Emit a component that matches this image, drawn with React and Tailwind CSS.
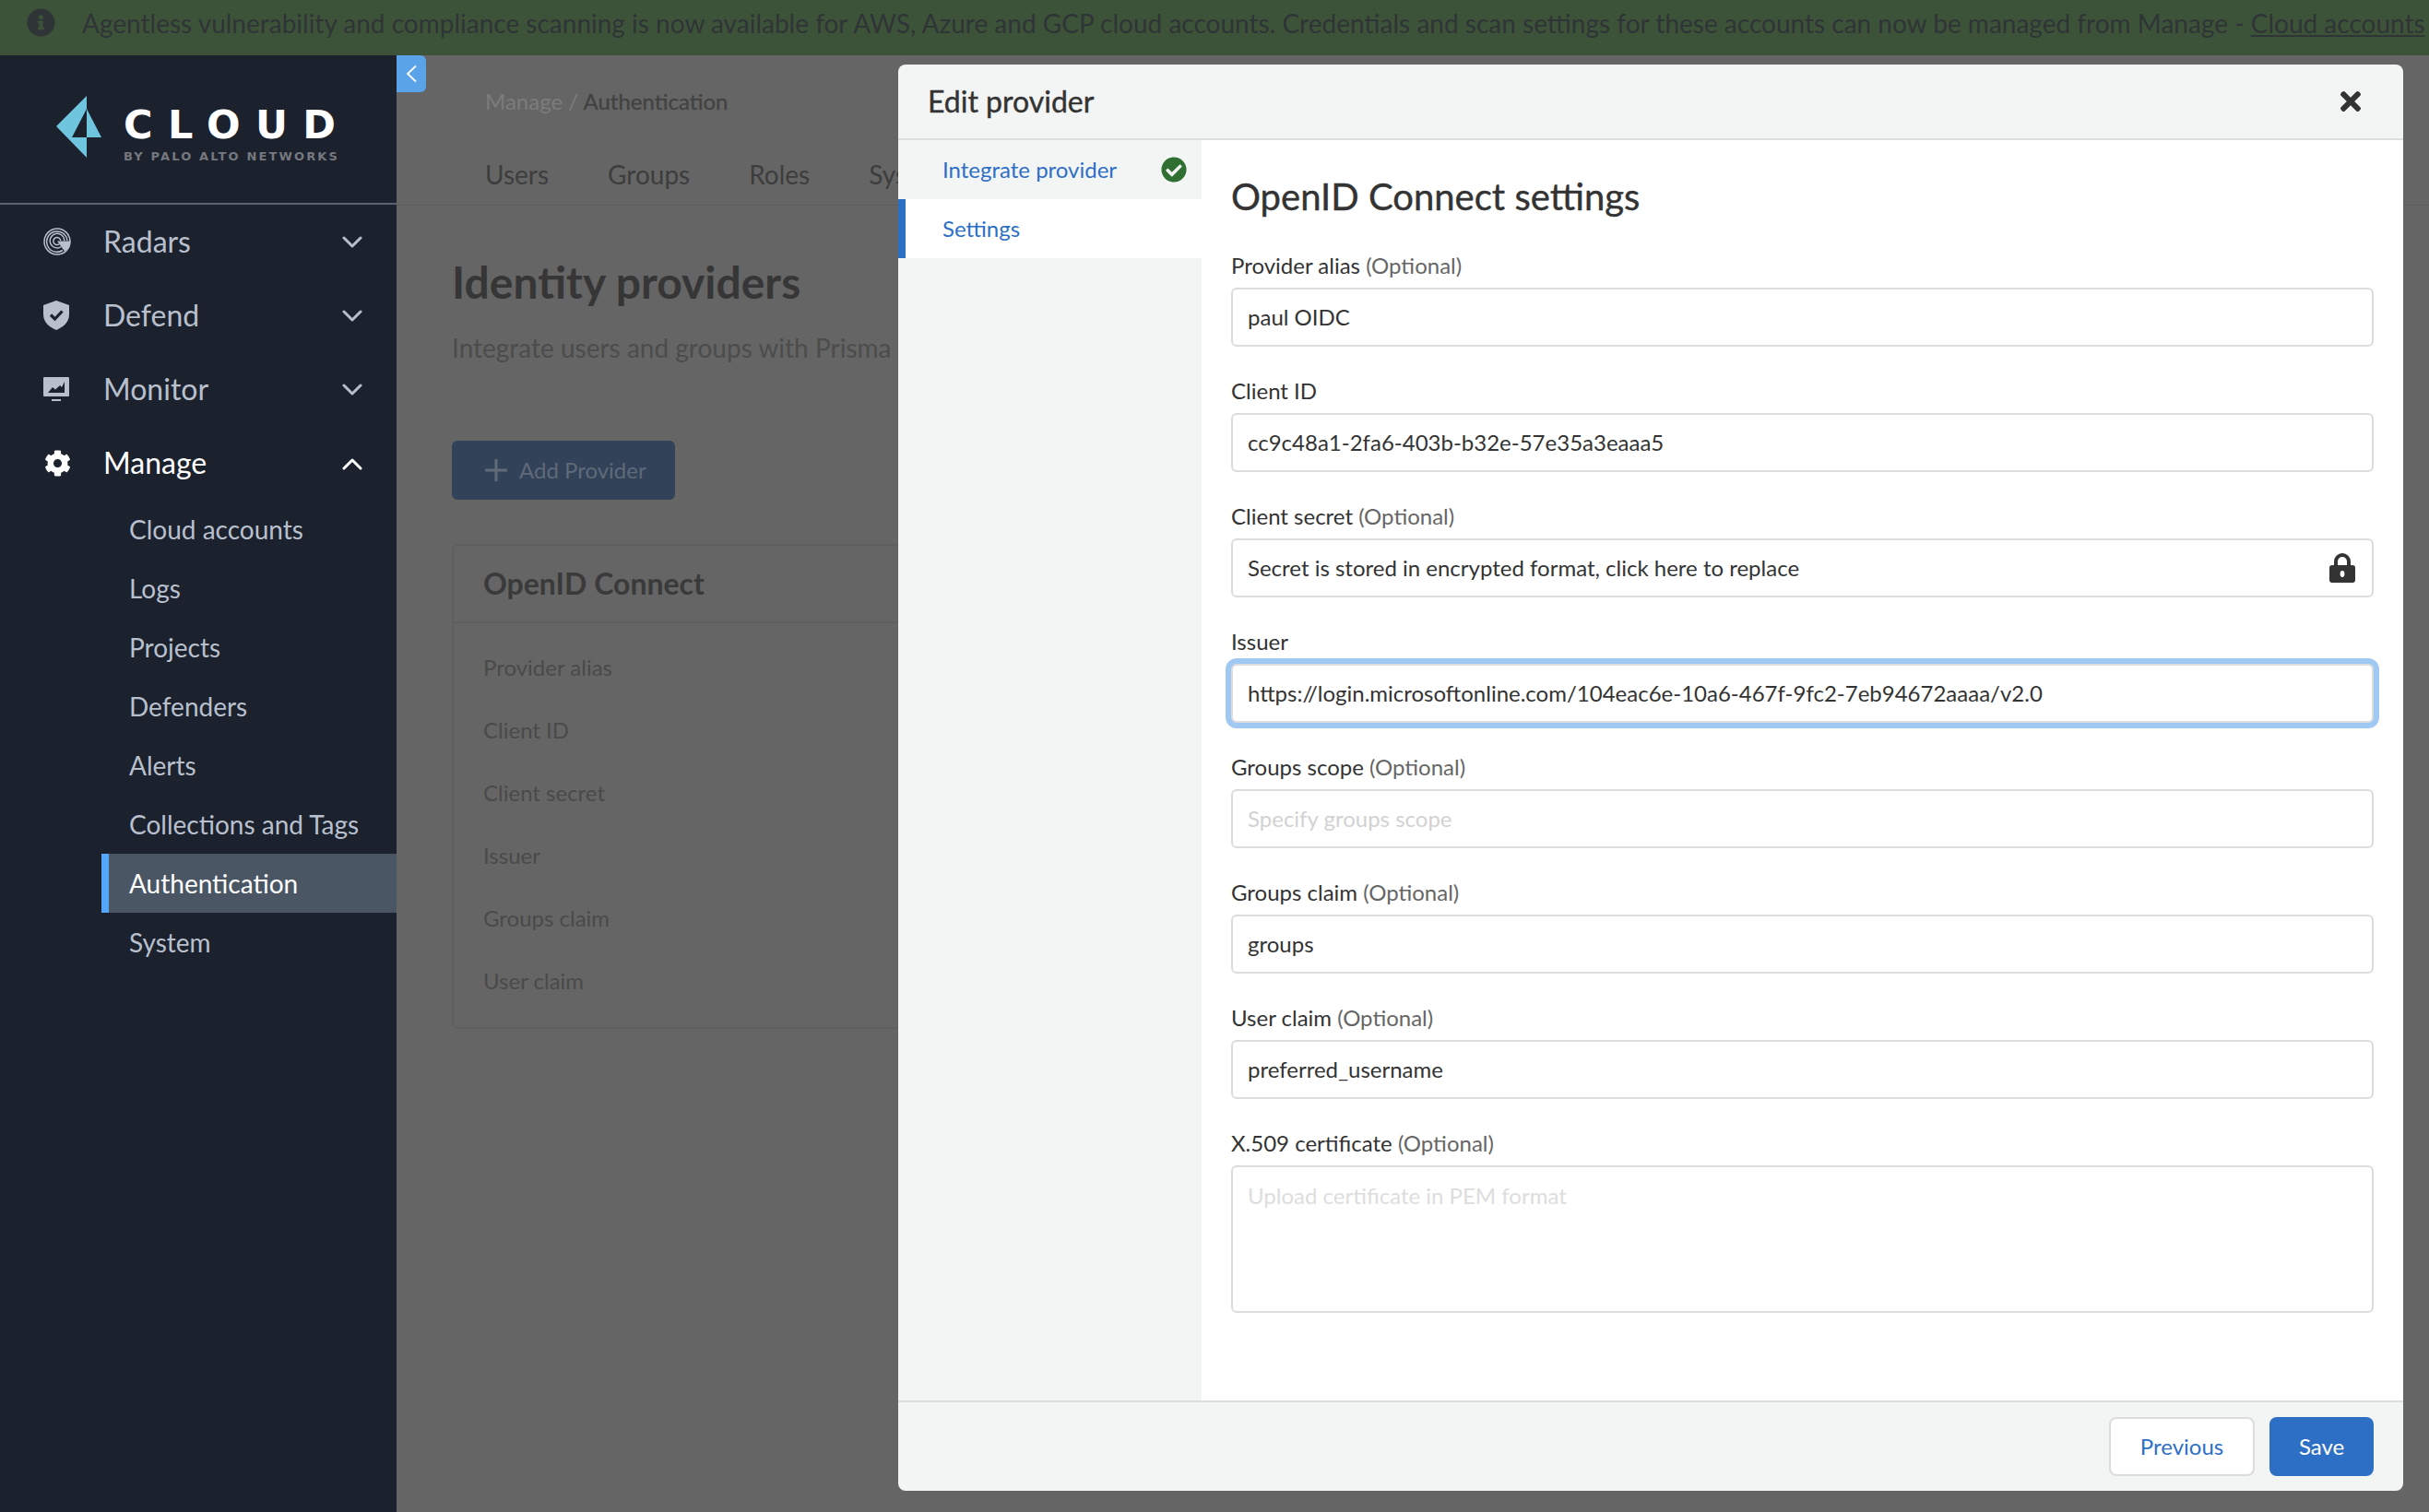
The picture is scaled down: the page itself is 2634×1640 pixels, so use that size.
import React from "react";
import { FaInfoCircle, FaCheckCircle, FaTimes, FaCog } from "react-icons/fa";

const mainNav = [
  { label: "Radars", icon: <RadarIcon /> },
  { label: "Defend", icon: <ShieldIcon /> },
  { label: "Monitor", icon: <MonitorIcon /> },
];

const subNav = ["Cloud accounts", "Logs", "Projects", "Defenders", "Alerts", "Collections and Tags", "Authentication", "System"];

const cardRows = ["Provider alias", "Client ID", "Client secret", "Issuer", "Groups claim", "User claim"];

const fields = [
  { label: "Provider alias", optional: true, value: "paul OIDC" },
  { label: "Client ID", value: "cc9c48a1-2fa6-403b-b32e-57e35a3eaaa5" },
  { label: "Client secret", optional: true, value: "Secret is stored in encrypted format, click here to replace", lock: true },
  { label: "Issuer", value: "https://login.microsoftonline.com/104eac6e-10a6-467f-9fc2-7eb94672aaaa/v2.0", focus: true },
  { label: "Groups scope", optional: true, placeholder: "Specify groups scope" },
  { label: "Groups claim", optional: true, value: "groups" },
  { label: "User claim", optional: true, value: "preferred_username" },
];

function RadarIcon() {
  return (
    <svg width="30" height="30" viewBox="0 0 30 30" fill="none" stroke="#b9c0cd" strokeWidth="1.5">
      <circle cx="15" cy="15" r="14" />
      <path d="M21 24.5A11.2 11.2 0 1 1 26 14" />
      <path d="M19.5 20.5A7.8 7.8 0 1 1 22.8 14" />
      <path d="M17.5 17.5A4 4 0 1 1 18.8 14" />
      <path d="M15 14.5L29.4 14.5A14 14 0 0 1 23 25.5Z" fill="#b9c0cd" stroke="none" />
    </svg>
  );
}

function ShieldIcon() {
  return (
    <svg width="28" height="32" viewBox="0 0 28 32">
      <path d="M14 0L28 5V15C28 24 21 29 14 32C7 29 0 24 0 15V5Z" fill="#b9c0cd" />
      <path d="M8 15.5L12.5 20L20.5 11.5" fill="none" stroke="#1b212d" strokeWidth="3.2" />
    </svg>
  );
}

function MonitorIcon() {
  return (
    <svg width="28" height="26" viewBox="0 0 28 26">
      <path d="M1 0H27a1 1 0 0 1 1 1V20a1 1 0 0 1-1 1H1a1 1 0 0 1-1-1V1a1 1 0 0 1 1-1Z" fill="#b9c0cd" />
      <path d="M5 17L10 11L13 13.5L18 9L20 11L23 5V17Z" fill="#1b212d" />
      <rect x="9" y="24" width="10" height="2" fill="#b9c0cd" />
    </svg>
  );
}

function Chevron({ up, color }) {
  return (
    <svg width="22" height="14" viewBox="0 0 22 14" fill="none" stroke={color} strokeWidth="3" strokeLinecap="round" strokeLinejoin="round" className="mr-[37px] mt-[2px]">
      <path d={up ? "M2 12L11 3L20 12" : "M2 2L11 11L20 2"} />
    </svg>
  );
}

function LockIcon() {
  return (
    <svg width="28" height="32" viewBox="0 0 28 32">
      <path d="M7 14V9a7 7 0 0 1 14 0V14" fill="none" stroke="#333" strokeWidth="4" />
      <rect x="0" y="13" width="28" height="19" rx="3" fill="#333" />
      <ellipse cx="14" cy="22.5" rx="2.4" ry="3.4" fill="white" />
    </svg>
  );
}

function Logo() {
  return (
    <svg width="50" height="67" viewBox="0 0 50 67">
      <path d="M33 0V14L17 45H33V67L0 33Z" fill="#6fc5de" />
      <path d="M33 14L49 45H33Z" fill="#6fc5de" />
    </svg>
  );
}

function Sidebar() {
  return (
    <aside className="w-[430px] shrink-0 bg-[#1b212d] flex flex-col">
      <div className="h-[162px] border-b-2 border-[#5a6275] pt-[44px] pl-[61px] flex gap-[23px]">
        <Logo />
        <div className="pt-[9px]">
          <div className="text-white text-[43px] leading-[44px] font-bold tracking-[0.38em] font-['DejaVu_Sans',sans-serif] w-[240px] whitespace-nowrap">CLOUD</div>
          <div className="text-[#76787f] text-[13px] leading-[14px] mt-[6px] font-bold tracking-[0.165em] whitespace-nowrap font-['DejaVu_Sans',sans-serif]">BY PALO ALTO NETWORKS</div>
        </div>
      </div>
      <nav>
        {mainNav.map((item) => (
          <div key={item.label} className="h-[80px] flex items-center text-[#b9c0cd]">
            <div className="w-[112px] pl-[47px]">{item.icon}</div>
            <span className="flex-1 text-[32px]">{item.label}</span>
            <Chevron color="#b9c0cd" />
          </div>
        ))}
        <div className="h-[80px] flex items-center text-white">
          <div className="w-[112px] pl-[48px]"><FaCog className="text-[29px]" /></div>
          <span className="flex-1 text-[32px]">Manage</span>
          <Chevron up color="#ffffff" />
        </div>
      </nav>
      <div className="ml-[110px]">
        {subNav.map((item) => {
          const active = item === "Authentication";
          return (
            <div key={item} className={`h-[64px] flex items-center text-[28px] ${active ? "bg-[#4b5664] border-l-[8px] border-[#55a5fb] pl-[22px] text-white" : "pl-[30px] text-[#b9c0cd]"}`}>
              {item}
            </div>
          );
        })}
      </div>
    </aside>
  );
}

function Background() {
  return (
    <main className="flex-1 bg-[#656565] relative overflow-hidden">
      <div className="absolute left-0 top-0 w-[32px] h-[40px] bg-[#5ba3e8] rounded-r-[6px] text-white flex items-center justify-center">
        <svg width="12" height="20" viewBox="0 0 12 20" fill="none" stroke="white" strokeWidth="1.8"><path d="M11 1.5L2 10L11 18.5" /></svg>
      </div>
      <div className="h-[163px] border-b border-[#5c5c5c] pl-[96px]">
        <div className="pt-[35px] text-[24px] leading-[30px] text-[#7c7c7c]">
          Manage / <span className="text-[#424242] [-webkit-text-stroke:0.3px_#424242]">Authentication</span>
        </div>
        <div className="flex gap-[64px] mt-[46px] text-[28px] leading-[36px] text-[#3d3d3d] whitespace-nowrap">
          <span>Users</span>
          <span>Groups</span>
          <span>Roles</span>
          <span>System</span>
        </div>
      </div>
      <div className="pl-[60px]">
        <h1 className="mt-[53px] text-[48px] leading-[60px] font-bold text-[#363636]">Identity providers</h1>
        <p className="mt-[23px] text-[28px] leading-[36px] text-[#4c4c4c] whitespace-nowrap">Integrate users and groups with Prisma Cloud</p>
        <button className="mt-[83px] w-[242px] h-[64px] bg-[#314259] rounded-[6px] flex items-center pl-[36px] text-[24px] text-[#606a78]">
          <svg width="24" height="24" viewBox="0 0 24 24" stroke="#606a78" strokeWidth="3" className="mr-[13px]"><path d="M12 0V24M0 12H24" /></svg>
          Add Provider
        </button>
        <div className="mt-[48px] w-[800px] h-[526px] border-2 border-[#5f5f5f] rounded-[6px]">
          <div className="h-[84px] border-b-2 border-[#5f5f5f] pl-[32px] flex items-center text-[32px] font-bold text-[#3a3a3a]">OpenID Connect</div>
          <div className="pt-[14px] pl-[32px]">
            {cardRows.map((r) => (
              <div key={r} className="h-[68px] flex items-center text-[24px] text-[#4a4a4a]">{r}</div>
            ))}
          </div>
        </div>
      </div>
    </main>
  );
}

function Field({ label, optional, value, placeholder, lock, focus }) {
  return (
    <div className="h-[136px] flex flex-col">
      <div className="h-[48px] text-[24px] leading-[32px] text-[#333] pt-[8px] whitespace-nowrap">
        {label} {optional && <span className="text-[#666]">(Optional)</span>}
      </div>
      <div className={`h-[64px] shrink-0 bg-white border-2 border-[#dcdcdc] rounded-[6px] pl-[16px] pr-[18px] flex items-center justify-between text-[24px] ${focus ? "shadow-[0_0_0_6px_#9fc8f3]" : ""} ${placeholder ? "text-[#d2d2d2]" : "text-[#333]"}`}>
        <span>{value || placeholder}</span>
        {lock && <LockIcon />}
      </div>
    </div>
  );
}

function Modal() {
  return (
    <div className="absolute left-[974px] top-[70px] w-[1632px] h-[1547px] bg-[#f3f5f4] rounded-[8px] flex flex-col overflow-hidden">
      <header className="h-[82px] shrink-0 border-b-2 border-[#dcdddd] flex items-center justify-between pl-[32px] pr-[41px]">
        <span className="text-[32px] text-[#333] [-webkit-text-stroke:0.4px_#333]">Edit provider</span>
        <FaTimes className="text-[#333] text-[32px]" />
      </header>
      <div className="flex-1 flex min-h-0">
        <div className="w-[329px] shrink-0">
          <div className="h-[64px] flex items-center justify-between pl-[48px] pr-[16px] text-[24px] text-[#2e6fc6]">
            Integrate provider
            <FaCheckCircle className="text-[#2f6f31] text-[28px]" />
          </div>
          <div className="h-[64px] bg-white border-l-[8px] border-[#2e6fc6] flex items-center pl-[40px] text-[24px] text-[#2e6fc6]">Settings</div>
        </div>
        <div className="flex-1 bg-white pl-[32px] pr-[32px]">
          <h2 className="pt-[34px] h-[112px] text-[40px] leading-[54px] text-[#333] [-webkit-text-stroke:0.4px_#333]">OpenID Connect settings</h2>
          <div>
            {fields.map((f) => <Field key={f.label} {...f} />)}
            <div className="h-[48px] text-[24px] leading-[32px] text-[#333] pt-[8px]">
              X.509 certificate <span className="text-[#666]">(Optional)</span>
            </div>
            <div className="h-[160px] bg-white border-2 border-[#dcdcdc] rounded-[6px] px-[16px] pt-[13px] text-[24px] text-[#dddddd]">Upload certificate in PEM format</div>
          </div>
        </div>
      </div>
      <footer className="h-[98px] shrink-0 border-t-2 border-[#dcdddd] flex items-center justify-end gap-[16px] pr-[32px]">
        <button className="w-[158px] h-[64px] bg-white border-2 border-[#dcdcdc] rounded-[8px] text-[24px] text-[#2e6fc6]">Previous</button>
        <button className="w-[113px] h-[64px] bg-[#2e6fc6] rounded-[8px] text-[24px] text-white">Save</button>
      </footer>
    </div>
  );
}

export default function App() {
  return (
    <div className="relative w-[2634px] h-[1640px] overflow-hidden flex flex-col font-['Lato',sans-serif]">
      <div className="h-[60px] shrink-0 bg-[#3d5339] flex items-center pl-[29px] pb-[11px] text-[28px] text-[#2f3436] whitespace-nowrap overflow-hidden">
        <FaInfoCircle className="text-[31px] mr-[29px] shrink-0" />
        <span>Agentless vulnerability and compliance scanning is now available for AWS, Azure and GCP cloud accounts. Credentials and scan settings for these accounts can now be managed from Manage - <span className="underline">Cloud accounts</span></span>
      </div>
      <div className="flex-1 flex min-h-0">
        <Sidebar />
        <Background />
      </div>
      <Modal />
    </div>
  );
}
